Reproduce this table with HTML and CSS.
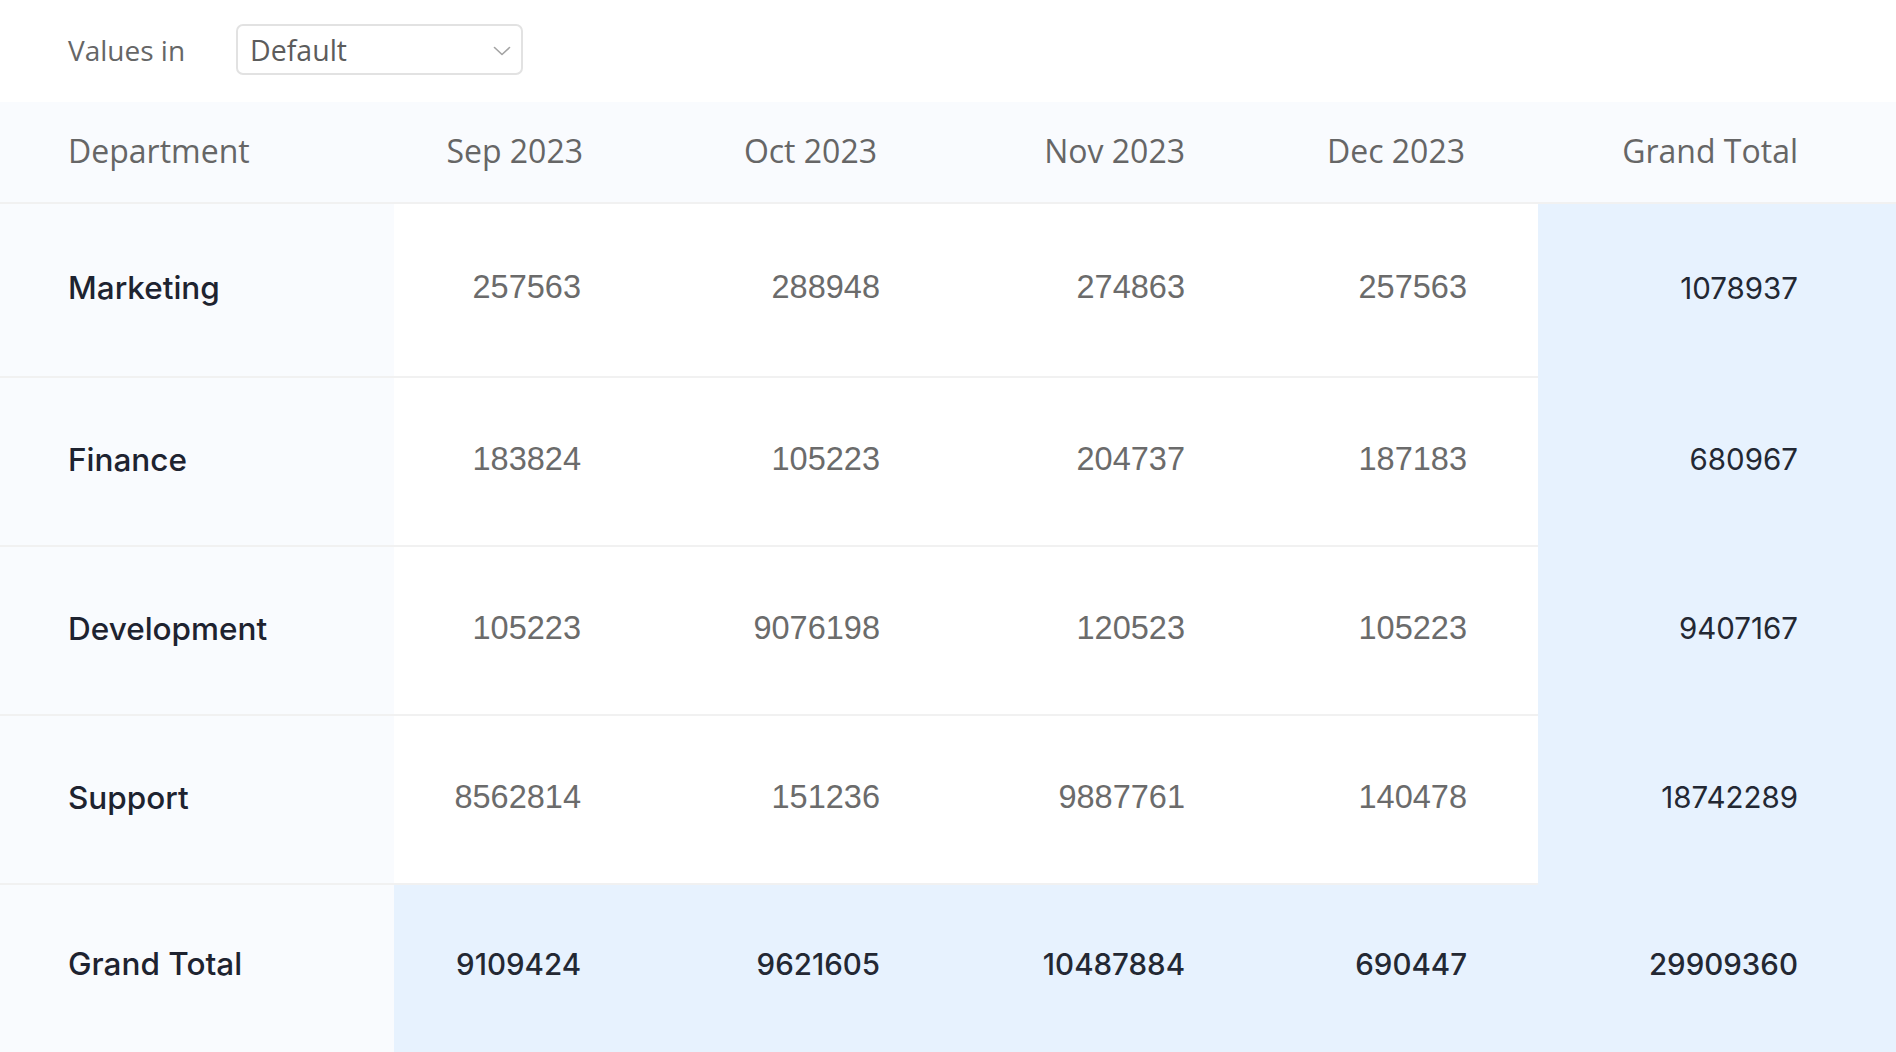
FILE: index.html
```html
<!DOCTYPE html>
<html lang="en">
<head>
<meta charset="utf-8">
<title>Department totals</title>
<link rel="stylesheet" href="styles.css">
</head>
<body>
<div class="toolbar">
  <span class="toolbar-label">Values in</span>
  <div class="select">
    <span class="select-value">Default</span>
    <svg class="select-chevron" width="18" height="10" viewBox="0 0 18 10"><path d="M1.5 1.5 L9 8.5 L16.5 1.5" fill="none" stroke="#a3a3a3" stroke-width="1.6" stroke-linecap="round" stroke-linejoin="round"/></svg>
  </div>
</div>
<div class="pivot">
  <div class="row row-head">
    <div class="cell cell-dept">Department</div>
    <div class="cell cell-num">Sep 2023</div>
    <div class="cell cell-num">Oct 2023</div>
    <div class="cell cell-num">Nov 2023</div>
    <div class="cell cell-num">Dec 2023</div>
    <div class="cell cell-num cell-last">Grand Total</div>
  </div>
  <div class="row row-body row-first">
    <div class="cell cell-dept">Marketing</div>
    <div class="cell cell-num col-sep">257563</div>
    <div class="cell cell-num col-oct">288948</div>
    <div class="cell cell-num col-nov">274863</div>
    <div class="cell cell-num col-dec">257563</div>
    <div class="cell cell-num cell-last cell-total">1078937</div>
  </div>
  <div class="row row-body">
    <div class="cell cell-dept">Finance</div>
    <div class="cell cell-num col-sep">183824</div>
    <div class="cell cell-num col-oct">105223</div>
    <div class="cell cell-num col-nov">204737</div>
    <div class="cell cell-num col-dec">187183</div>
    <div class="cell cell-num cell-last cell-total">680967</div>
  </div>
  <div class="row row-body">
    <div class="cell cell-dept">Development</div>
    <div class="cell cell-num col-sep">105223</div>
    <div class="cell cell-num col-oct">9076198</div>
    <div class="cell cell-num col-nov">120523</div>
    <div class="cell cell-num col-dec">105223</div>
    <div class="cell cell-num cell-last cell-total">9407167</div>
  </div>
  <div class="row row-body">
    <div class="cell cell-dept">Support</div>
    <div class="cell cell-num col-sep">8562814</div>
    <div class="cell cell-num col-oct">151236</div>
    <div class="cell cell-num col-nov">9887761</div>
    <div class="cell cell-num col-dec">140478</div>
    <div class="cell cell-num cell-last cell-total">18742289</div>
  </div>
  <div class="row row-grand">
    <div class="cell cell-dept">Grand Total</div>
    <div class="cell cell-num col-sep">9109424</div>
    <div class="cell cell-num col-oct">9621605</div>
    <div class="cell cell-num col-nov">10487884</div>
    <div class="cell cell-num col-dec">690447</div>
    <div class="cell cell-num cell-last">29909360</div>
  </div>
</div>
</body>
</html>
```

FILE: styles.css
```css
html, body {
  margin: 0;
  padding: 0;
  background: #ffffff;
}

body {
  font-family: "Open Sans", "Liberation Sans", sans-serif;
  color: #6a6a6a;
  overflow: hidden;
  height: 1052px;
}

.toolbar {
  height: 102px;
  display: flex;
  align-items: center;
  padding-left: 68px;
  padding-bottom: 3px;
  box-sizing: border-box;
  gap: 51px;
}

.toolbar-label {
  font-size: 28px;
  color: #666666;
}

.select {
  width: 287px;
  height: 51px;
  box-sizing: border-box;
  border: 2px solid #e2e2e2;
  border-radius: 7px;
  display: flex;
  align-items: center;
  justify-content: space-between;
  padding: 0 10px 0 12px;
}

.select-value {
  font-size: 28.5px;
  color: #5c5c5c;
}

.select-chevron {
  display: block;
  margin-top: 2px;
}

.pivot {
  display: flex;
  flex-direction: column;
}

.row {
  display: grid;
  grid-template-columns: 394px 262px 294px 308px 280px 1fr;
  border-bottom: 2px solid #f1f1f1;
}

.row-head {
  height: 100px;
  background: #f9fbfe;
}

.row-body {
  height: 169px;
  box-sizing: border-box;
}

.row-first {
  height: 174px;
}

.row-grand {
  height: 169px;
  border-bottom: none;
}

.cell {
  display: flex;
  align-items: center;
  font-size: 30px;
  padding-bottom: 5px;
  box-sizing: border-box;
}

.cell-dept {
  padding-left: 68px;
  background: #f9fbfe;
}

.cell-num {
  justify-content: flex-end;
  padding-right: 73px;
}

.cell-last {
  padding-right: 98px;
}

.row-head .cell {
  color: #666666;
  font-size: 32px;
  padding-bottom: 4px;
}

.row-body .cell-dept,
.row-grand .cell-dept {
  color: #1e2330;
  font-family: "Inter", "Open Sans", sans-serif;
  font-weight: 500;
  font-size: 31.5px;
}

.row-body .cell-num {
  font-family: "Liberation Sans", Arial, sans-serif;
  color: #6b6b6b;
  font-size: 32.5px;
}

.row-body .col-sep,
.row-grand .col-sep {
  padding-right: 75px;
}

.row-body .col-oct,
.row-grand .col-oct {
  padding-right: 70px;
}

.row-body .col-nov,
.row-grand .col-nov {
  padding-right: 73px;
}

.row-body .col-dec,
.row-grand .col-dec {
  padding-right: 71px;
}

.row-body .cell-last {
  padding-right: 98px;
}

.row-body .cell-total {
  background: #e7f2fe;
  color: #232833;
  font-family: "Inter", "Liberation Sans", sans-serif;
  font-size: 29.5px;
  margin-bottom: -2px;
  padding-bottom: 7px;
}

.row-grand .cell-num {
  background: #e7f2fe;
  color: #232833;
  font-family: "Inter", "Liberation Sans", sans-serif;
  font-weight: 500;
  font-size: 29.5px;
  padding-bottom: 12px;
}

.row-grand .cell-dept {
  padding-bottom: 12px;
}

.row-grand .cell-last {
  padding-right: 98px;
}
```
